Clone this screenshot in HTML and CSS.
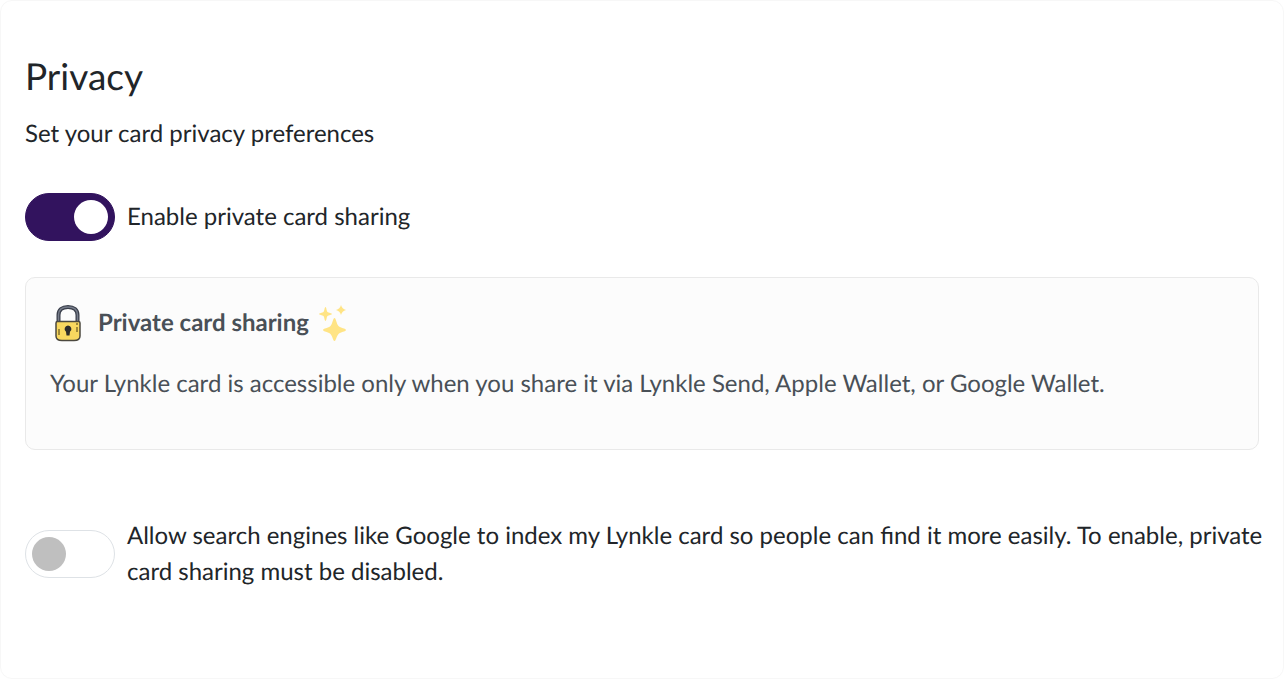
FILE: index.html
```html
<!DOCTYPE html>
<html lang="en">
<head>
    <meta charset="UTF-8">
    <meta name="viewport" content="width=device-width, initial-scale=1.0">
    <title>Privacy</title>
    <link rel="stylesheet" href="styles.css">
</head>
<body>
    <section class="card">
        <h2>Privacy</h2>
        <p class="subtitle">Set your card privacy preferences</p>

        <div class="switch-row">
            <input type="checkbox" class="switch" id="privateSharing" checked>
            <label for="privateSharing">Enable private card sharing</label>
        </div>

        <div class="info">
            <h3>
                <svg class="lock" viewBox="0 0 28 38" aria-hidden="true">
                    <path d="M4.500 19V11C4.500 6 8 3 14 3S23.500 6 23.500 11V19" fill="none" stroke="#3a3f4b" stroke-width="4"/>
                    <path d="M4.500 19V11C4.500 6 8 3 14 3S23.500 6 23.500 11V19" fill="none" stroke="#777d8b" stroke-width="1.500"/>
                    <path d="M2 19Q2 17.500 3.500 17.500H24.500Q26 17.500 26 19V32Q26 36.500 20 36.500H8Q2 36.500 2 32Z" fill="#f9d85f" stroke="#4b483f" stroke-width="1.500"/>
                    <path d="M5 25V31M23 19V21M23 23V28" stroke="#a08938" stroke-width="2"/>
                    <path d="M14 21.500a3.500 3.500 0 0 0-2 6.300l.5 3.700h3l.5-3.700a3.500 3.500 0 0 0-2-6.300z" fill="#2d2c2b"/>
                </svg>
                <span>Private card sharing</span>
                <svg class="sparkles" viewBox="0 0 28 36" aria-hidden="true">
                    <g fill="#ffe485">
                        <path d="M6.500 2C7.500 2 7.500 6 8.500 7C9.500 8 13 8 13 9C13 10 9.500 10 8.500 11C7.500 12 7.500 16 6.500 16C5.500 16 5.500 12 4.500 11C3.500 10 0 10 0 9C0 8 3.500 8 4.500 7C5.500 6 5.500 2 6.500 2Z"/>
                        <path d="M22 0Q23 4 27 5Q23 6 22 10Q21 6 17 5Q21 4 22 0Z"/>
                        <path d="M15.500 13C17 13 17.500 19 19.500 21C21.500 23 27 23.500 27 25C27 26.500 21.500 27 19.500 29C17.500 31 17 36 15.500 36C14 36 13.500 31 11.500 29C9.500 27 4 26.500 4 25C4 23.500 9.500 23 11.500 21C13.500 19 14 13 15.500 13Z"/>
                    </g>
                </svg>
            </h3>
            <p>Your Lynkle card is accessible only when you share it via Lynkle Send, Apple Wallet, or Google Wallet.</p>
        </div>

        <div class="switch-row">
            <input type="checkbox" class="switch" id="searchIndex">
            <label for="searchIndex">Allow search engines like Google to index my Lynkle card so people can find it more easily. To enable, private card sharing must be disabled.</label>
        </div>
    </section>
</body>
</html>
```
FILE: styles.css
```css
* {
    box-sizing: border-box;
}
body {
    margin: 0;
    background-color: #fff;
    color: #212529;
    font-family: Lato, sans-serif;
    font-size: 24px;
    line-height: 36px;
    text-rendering: geometricPrecision;
}
h2, h3, p {
    margin: 0;
}
.card {
    min-height: 100vh;
    padding: 53px 24px 84px;
    border: 1px solid #f7f7f7;
    border-radius: 12px;
}
h2 {
    margin-bottom: 18px;
    font-size: 37px;
    font-weight: 400;
    line-height: 44px;
}
.subtitle {
    margin-bottom: 41px;
}
.switch-row {
    display: flex;
    align-items: center;
    gap: 12px;
    margin-right: -12px;
}
.switch {
    appearance: none;
    flex: none;
    display: flex;
    align-items: center;
    width: 90px;
    height: 48px;
    margin: 0;
    padding: 0 6px;
    border: 1px solid #dee2e6;
    border-radius: 24px;
    background-color: #fff;
    cursor: pointer;
}
.switch::before {
    content: "";
    width: 34px;
    height: 34px;
    border-radius: 50%;
    background-color: #bfbfbf;
}
.switch:checked {
    justify-content: flex-end;
    border-color: #32135e;
    background-color: #32135e;
}
.switch:checked::before {
    background-color: #fff;
}
.info {
    margin: 36px 0 68px;
    padding: 24px 24px 47px;
    border: 1px solid #e9e9e9;
    border-radius: 10px;
    background-color: #fcfcfc;
    color: #495057;
}
h3 {
    display: flex;
    align-items: center;
    margin-bottom: 22px;
    font-size: 24px;
    font-weight: 700;
    line-height: 42px;
}
.lock {
    width: 28px;
    height: 38px;
    margin: 0 16px 0 4px;
}
.sparkles {
    width: 28px;
    height: 36px;
    margin-left: 10px;
}
```
